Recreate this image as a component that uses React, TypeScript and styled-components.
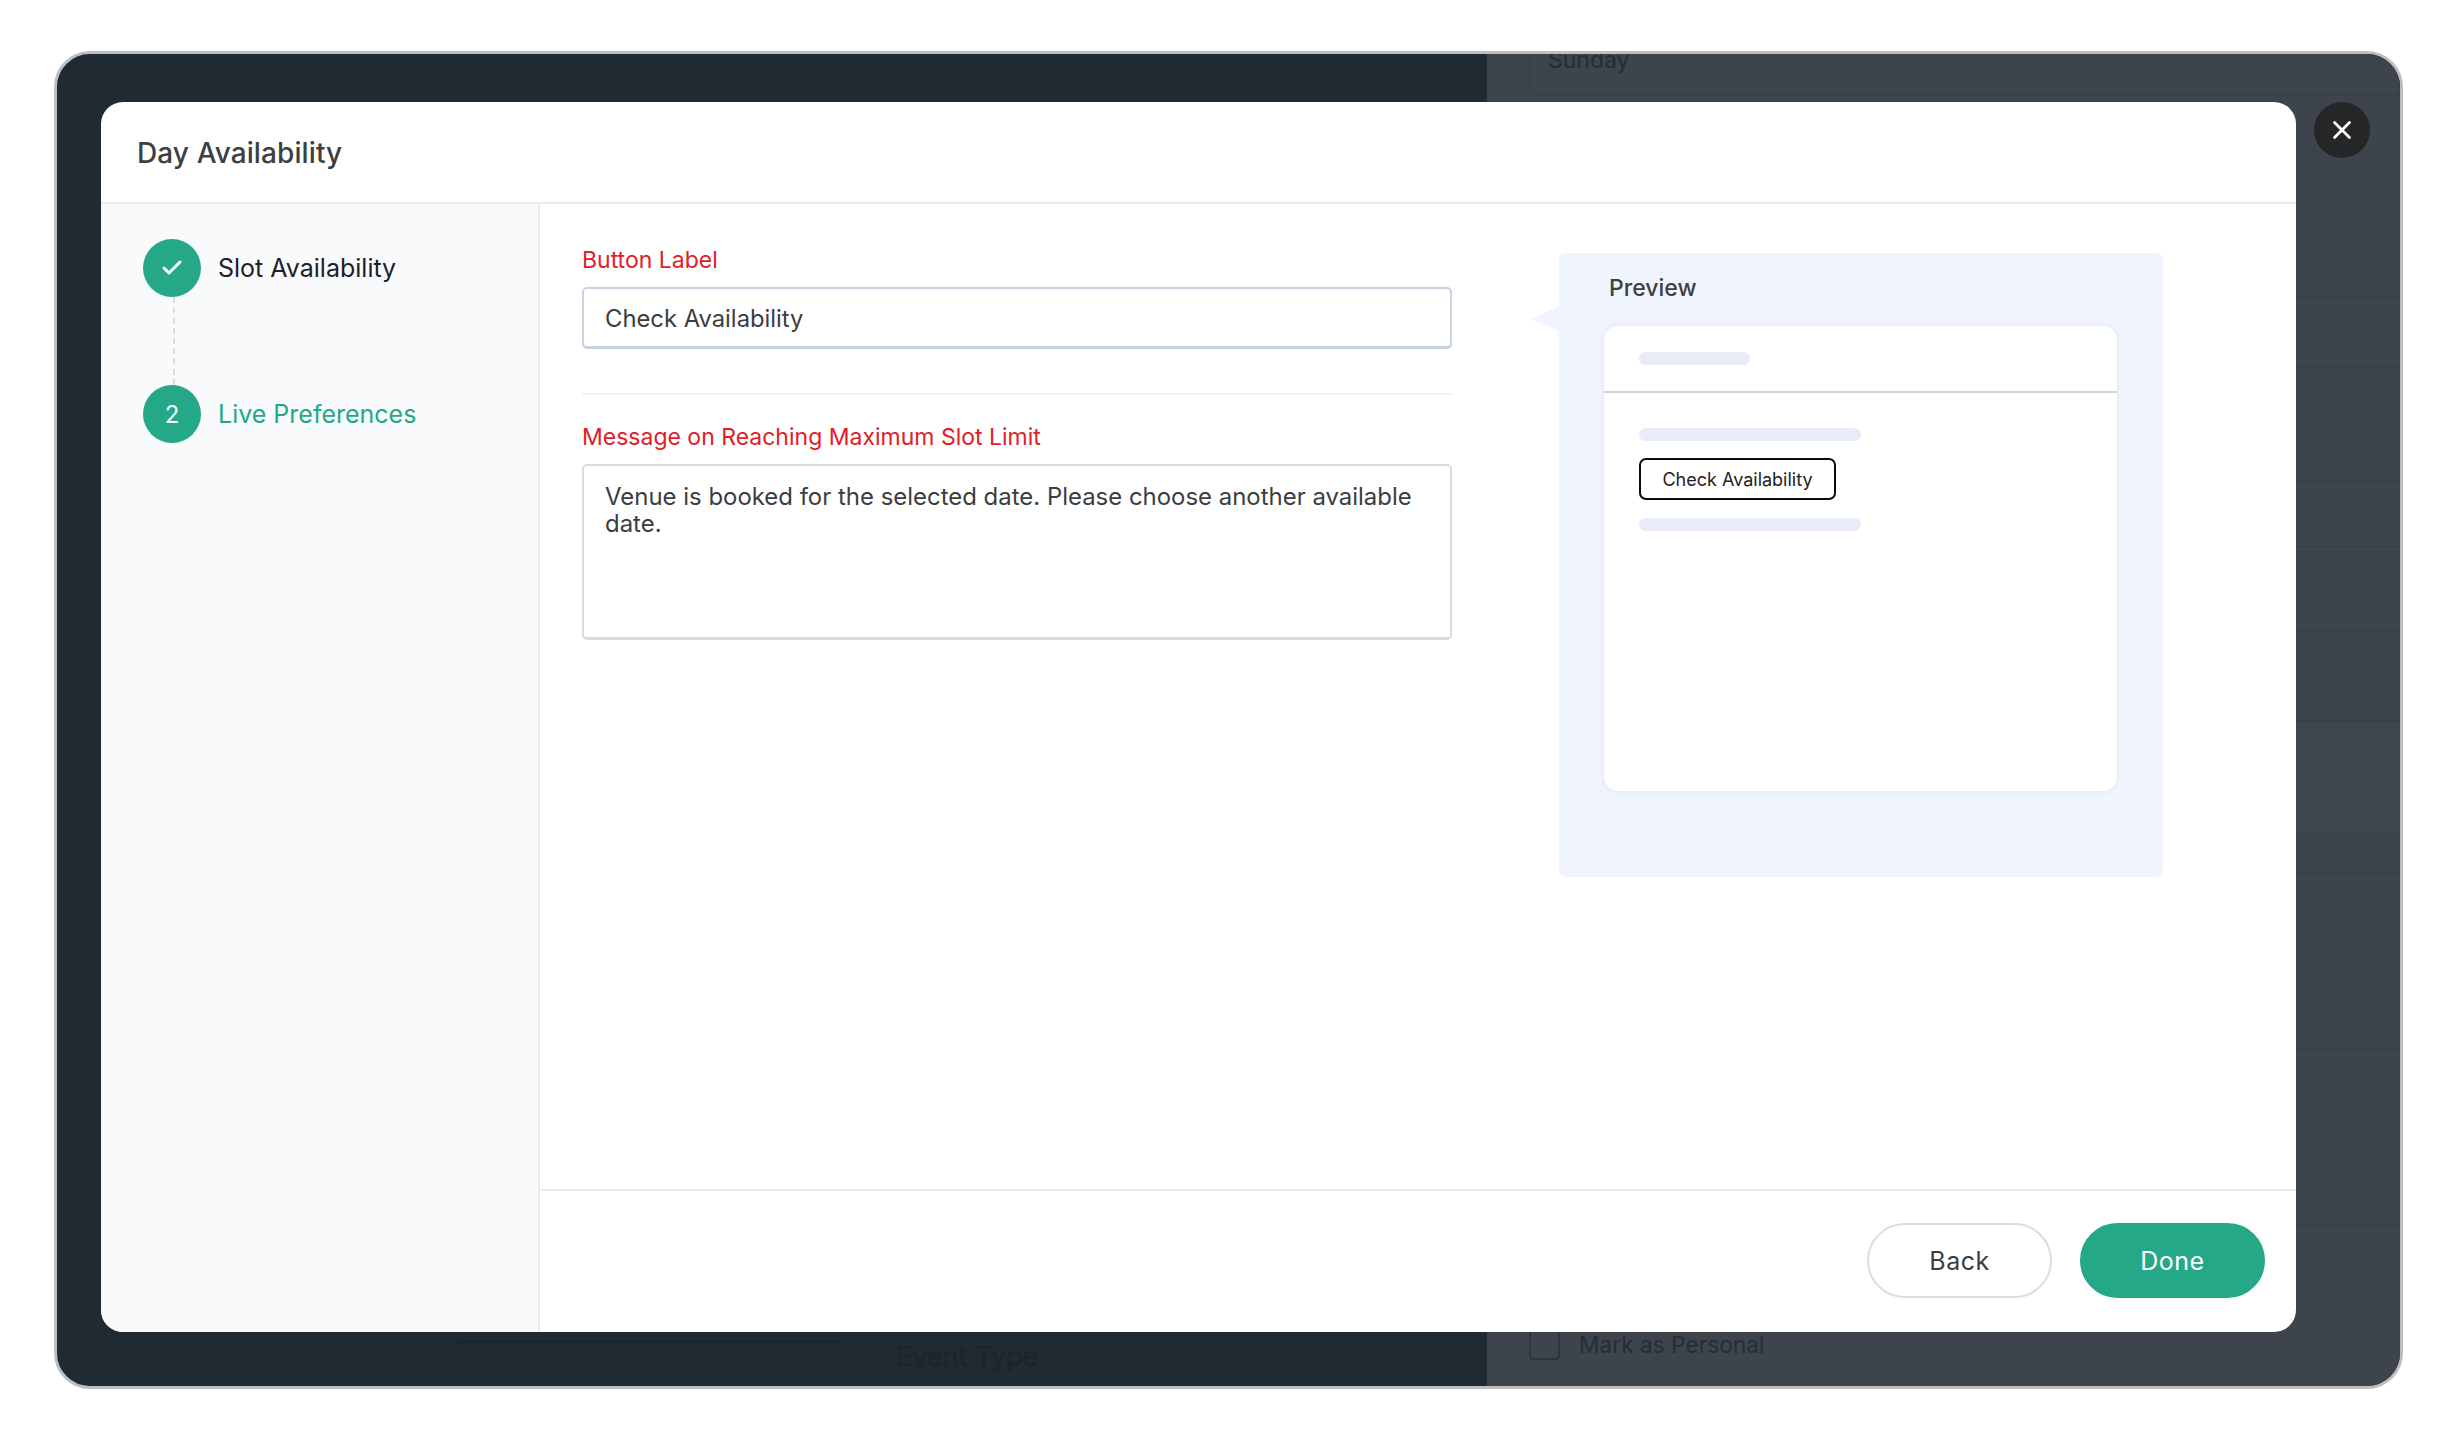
import React from "react";
import styled, { createGlobalStyle } from "styled-components";
import { X, Check } from "lucide-react";

const GlobalStyle = createGlobalStyle`
  html, body {
    margin: 0;
    padding: 0;
    background: #fff;
    font-family: Inter, "Noto Sans", sans-serif;
  }
  * {
    box-sizing: border-box;
  }
`;

const Frame = styled.div`
  position: relative;
  display: flex;
  width: 2349px;
  height: 1338px;
  margin: 51px 0 0 54px;
  border: 3px solid #bcbec1;
  border-radius: 36px;
  overflow: hidden;
  background: #1f2a32;
`;

const BackLeft = styled.div`
  width: 1430px;
  flex: none;
  display: flex;
  flex-direction: column;
  justify-content: flex-end;
  align-items: flex-start;
  padding: 0 0 13px 401px;
`;

const BackField = styled.div`
  width: 387px;
  height: 2px;
  background: #1b252c;
`;

const BackTitle = styled.div`
  margin: -3px 0 0 438px;
  font-size: 27px;
  color: #1a242b;
`;

const BackRight = styled.div`
  flex: 1;
  position: relative;
  display: flex;
  flex-direction: column;
  background: #3d444c;
`;

const BackRow = styled.div<{ $h: number; $tint?: boolean }>`
  height: ${(p) => p.$h}px;
  flex: none;
  border-bottom: 2px solid ${(p) => (p.$tint ? "#3a464b" : "#384048")};
  background: ${(p) => (p.$tint ? "#3b474c" : "transparent")};
`;

const SundayBox = styled.div`
  height: 42px;
  flex: none;
  margin-left: 42px;
  padding-left: 17px;
  border: 2px solid #384048;
  border-top: 0;
  border-radius: 0 0 4px 4px;
  font-size: 23px;
  line-height: 12px;
  color: #262d34;
`;

const PersonalRow = styled.div`
  position: absolute;
  left: 42px;
  bottom: 26px;
  display: flex;
  align-items: center;
  gap: 19px;
  font-size: 22.7px;
  color: #262d34;
`;

const PersonalBox = styled.span`
  width: 31px;
  height: 31px;
  border: 2px solid #2d343b;
  border-radius: 4px;
`;

const Modal = styled.div`
  position: absolute;
  left: 44px;
  top: 48px;
  width: 2195px;
  height: 1230px;
  display: flex;
  flex-direction: column;
  background: #fff;
  border-radius: 22px;
  overflow: hidden;
`;

const ModalHeader = styled.div`
  height: 102px;
  flex: none;
  display: flex;
  align-items: center;
  padding: 2px 0 0 36px;
  border-bottom: 2px solid #e9eaec;
  font-size: 28px;
  font-weight: 500;
  letter-spacing: 0.1px;
  color: #3d3f42;
`;

const ModalBody = styled.div`
  flex: 1;
  display: flex;
  min-height: 0;
`;

const Sidebar = styled.div`
  width: 439px;
  flex: none;
  padding: 35px 0 0 42px;
  background: #f9fafc;
  border-right: 2px solid #e8eaf0;
`;

const Step = styled.div`
  display: flex;
  align-items: center;
  gap: 17px;
`;

const StepCircle = styled.div`
  width: 58px;
  height: 58px;
  flex: none;
  display: flex;
  align-items: center;
  justify-content: center;
  border-radius: 50%;
  background: #24a888;
  color: #fff;
  font-size: 24px;
`;

const StepLabel = styled.div<{ $active?: boolean }>`
  font-size: 25px;
  color: ${(p) => (p.$active ? "#24a888" : "#1f2124")};
`;

const StepLine = styled.div`
  height: 88px;
  margin-left: 30px;
  border-left: 2px dashed #dcdcdf;
`;

const Main = styled.div`
  flex: 1;
  display: flex;
  flex-direction: column;
  min-width: 0;
`;

const Content = styled.div`
  flex: 1;
  display: flex;
  align-items: flex-start;
  gap: 107px;
  padding: 41px 0 0 42px;
`;

const Form = styled.div`
  width: 870px;
  flex: none;
`;

const FieldLabel = styled.div`
  font-size: 23px;
  line-height: 30px;
  margin-bottom: 12px;
  color: #df2027;
`;

const TextField = styled.div`
  height: 62px;
  display: flex;
  align-items: center;
  padding: 2px 21px 0;
  border: 2px solid #c9d3e0;
  border-bottom-width: 3px;
  border-radius: 5px;
  font-size: 23.8px;
  color: #3b3d40;
`;

const Divider = styled.div`
  height: 2px;
  margin: 44px 0 27px;
  background: #f1f2f4;
`;

const TextArea = styled.div`
  height: 176px;
  padding: 17px 21px;
  border: 2px solid #d9dbdf;
  border-bottom-width: 3px;
  border-radius: 5px;
  font-size: 23.95px;
  line-height: 27px;
  color: #3b3d40;
`;

const PreviewPanel = styled.div`
  position: relative;
  width: 604px;
  height: 624px;
  flex: none;
  margin-top: 8px;
  padding: 20px 45px 0;
  background: #f0f4fc;
  border-radius: 6px;

  &::before {
    content: "";
    position: absolute;
    left: -29px;
    top: 54px;
    border: solid transparent;
    border-width: 12px 29px 12px 0;
    border-right-color: #f0f4fc;
  }
`;

const PreviewTitle = styled.div`
  margin-left: 5px;
  font-size: 23px;
  font-weight: 500;
  line-height: 30px;
  color: #3d3f42;
`;

const PreviewCard = styled.div`
  width: 513px;
  height: 465px;
  margin-top: 23px;
  background: #fff;
  border-radius: 14px;
  box-shadow: 0 0 5px rgba(150, 165, 195, 0.2);
`;

const CardHead = styled.div`
  height: 67px;
  padding: 26px 35px 0;
  border-bottom: 2px solid #cfd2da;
`;

const CardBody = styled.div`
  display: flex;
  flex-direction: column;
  align-items: flex-start;
  padding: 35px 35px 0;
`;

const Bar = styled.div<{ $w: number }>`
  width: ${(p) => p.$w}px;
  height: 13px;
  background: #e7ecf8;
  border-radius: 7px;
`;

const PreviewButton = styled.div`
  width: 197px;
  height: 42px;
  margin: 17px 0 18px;
  display: flex;
  align-items: center;
  justify-content: center;
  border: 2px solid #0c0c0c;
  border-radius: 7px;
  font-size: 18px;
  color: #1f2124;
`;

const Footer = styled.div`
  height: 143px;
  flex: none;
  display: flex;
  justify-content: flex-end;
  gap: 28px;
  padding: 32px 31px 0 0;
  border-top: 2px solid #e9eaec;
`;

const PillButton = styled.button<{ $primary?: boolean }>`
  width: 185px;
  height: 75px;
  border-radius: 38px;
  border: 2px solid ${(p) => (p.$primary ? "#24a888" : "#d9dee4")};
  background: ${(p) => (p.$primary ? "#24a888" : "#fff")};
  color: ${(p) => (p.$primary ? "#fff" : "#3b3d40")};
  font-family: inherit;
  font-size: 25px;
  letter-spacing: 0.5px;
`;

const CloseButton = styled.button`
  position: absolute;
  left: 2257px;
  top: 48px;
  width: 56px;
  height: 56px;
  display: flex;
  align-items: center;
  justify-content: center;
  padding: 0;
  border: 0;
  border-radius: 50%;
  background: #252627;
  color: #fff;
`;

const rowHeights = [203, 69, 115, 65, 83, 91, 109, 44, 175, 177];

const App = (): JSX.Element => {
  return (
    <>
      <GlobalStyle />
      <Frame>
        <BackLeft>
          <BackField />
          <BackTitle>Event Type</BackTitle>
        </BackLeft>
        <BackRight>
          <SundayBox>Sunday</SundayBox>
          {rowHeights.map((h, i) => (
            <BackRow key={i} $h={h} $tint={i === 6} />
          ))}
          <PersonalRow>
            <PersonalBox />
            Mark as Personal
          </PersonalRow>
        </BackRight>
        <Modal>
          <ModalHeader>Day Availability</ModalHeader>
          <ModalBody>
            <Sidebar>
              <Step>
                <StepCircle>
                  <Check size={24} strokeWidth={3} />
                </StepCircle>
                <StepLabel>Slot Availability</StepLabel>
              </Step>
              <StepLine />
              <Step>
                <StepCircle>2</StepCircle>
                <StepLabel $active>Live Preferences</StepLabel>
              </Step>
            </Sidebar>
            <Main>
              <Content>
                <Form>
                  <FieldLabel>Button Label</FieldLabel>
                  <TextField>Check Availability</TextField>
                  <Divider />
                  <FieldLabel>Message on Reaching Maximum Slot Limit</FieldLabel>
                  <TextArea>
                    Venue is booked for the selected date. Please choose another
                    available date.
                  </TextArea>
                </Form>
                <PreviewPanel>
                  <PreviewTitle>Preview</PreviewTitle>
                  <PreviewCard>
                    <CardHead>
                      <Bar $w={111} />
                    </CardHead>
                    <CardBody>
                      <Bar $w={222} />
                      <PreviewButton>Check Availability</PreviewButton>
                      <Bar $w={222} />
                    </CardBody>
                  </PreviewCard>
                </PreviewPanel>
              </Content>
              <Footer>
                <PillButton>Back</PillButton>
                <PillButton $primary>Done</PillButton>
              </Footer>
            </Main>
          </ModalBody>
        </Modal>
        <CloseButton>
          <X size={30} strokeWidth={2.2} />
        </CloseButton>
      </Frame>
    </>
  );
};

export default App;
